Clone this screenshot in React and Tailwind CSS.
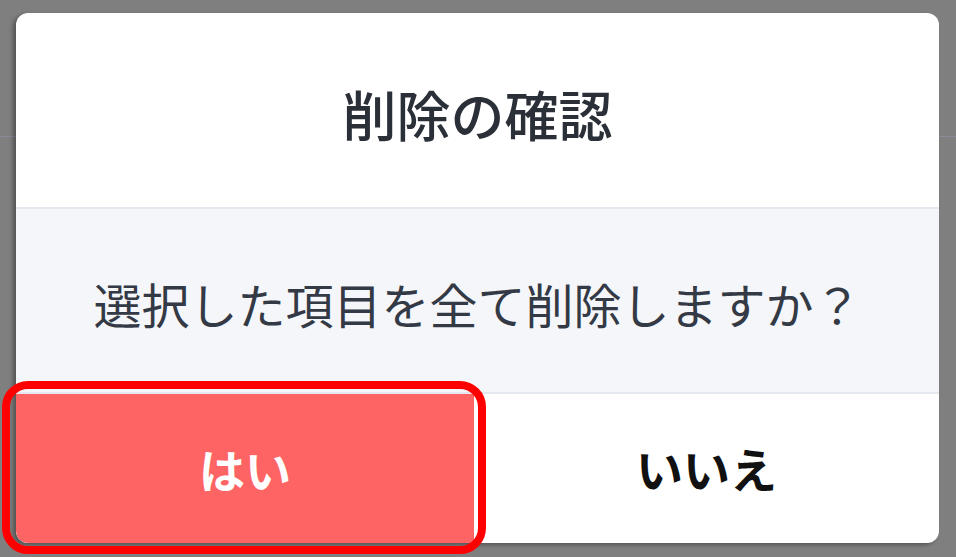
export default function App() {
  return (
    <div
      className="relative w-[956px] h-[557px] overflow-hidden bg-[#7f7f7f]"
      style={{ fontFamily: '"Noto Sans CJK JP", "Noto Sans", sans-serif' }}
    >
      {/* page behind the overlay */}
      <div className="absolute left-0 right-0 top-[136px] h-px bg-[#8a8b96]" />

      <div className="relative ml-[16px] mt-[13px] w-[923px] h-[530px] bg-white rounded-[12px] overflow-hidden flex flex-col shadow-[-3px_2px_4px_rgba(0,0,0,0.35)]">
        <div className="h-[194px] flex items-center justify-center pt-[6px] text-[54px] font-medium text-[#2b2f38]">
          削除の確認
        </div>
        <div className="h-[187px] border-y-2 border-[#e6e8f0] bg-[#f5f6fa] flex items-center justify-center pt-[4px] text-[48px] text-[#333a45]">
          選択した項目を全て削除しますか？
        </div>
        <div className="flex-1 flex">
          <button className="w-[458px] bg-[#ff6464] text-white text-[46px] font-bold flex items-center justify-center rounded-bl-[12px]">
            はい
          </button>
          <button className="flex-1 text-[#111111] text-[47px] font-bold flex items-center justify-center">
            いいえ
          </button>
        </div>
      </div>

      {/* highlight around the confirm button */}
      <div className="absolute left-[2px] top-[381px] w-[484px] h-[173px] border-[8px] border-[#ff0000] rounded-[26px]" />
    </div>
  );
}
